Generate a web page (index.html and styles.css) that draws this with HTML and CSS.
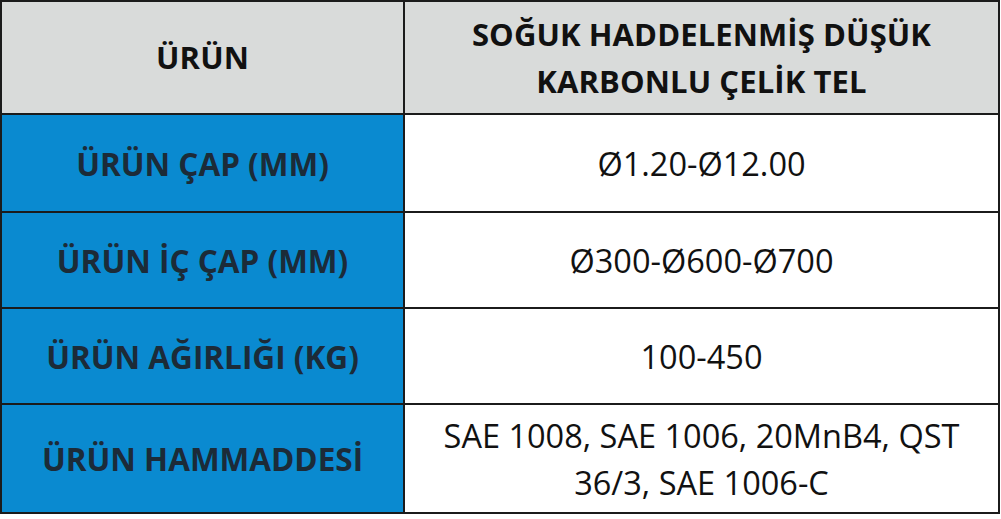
FILE: index.html
```html
<!DOCTYPE html>
<html lang="tr">
<head>
<meta charset="utf-8">
<link rel="stylesheet" href="styles.css">
</head>
<body>
<div class="spec">
  <div class="cell head">ÜRÜN</div>
  <div class="cell head">SOĞUK HADDELENMİŞ DÜŞÜK<br>KARBONLU ÇELİK TEL</div>
  <div class="cell label">ÜRÜN ÇAP (MM)</div>
  <div class="cell value">Ø1.20-Ø12.00</div>
  <div class="cell label">ÜRÜN İÇ ÇAP (MM)</div>
  <div class="cell value">Ø300-Ø600-Ø700</div>
  <div class="cell label">ÜRÜN AĞIRLIĞI (KG)</div>
  <div class="cell value">100-450</div>
  <div class="cell label">ÜRÜN HAMMADDESİ</div>
  <div class="cell value">SAE 1008, SAE 1006, 20MnB4, QST<br>36/3, SAE 1006-C</div>
</div>
</body>
</html>
```
FILE: styles.css
```css
html, body {
  margin: 0;
  padding: 0;
  background: #ffffff;
}
.spec {
  width: 1000px;
  box-sizing: border-box;
  display: grid;
  grid-template-columns: 401px 1fr;
  grid-template-rows: 111px 96px 94px 94px 107px;
  gap: 2px;
  background: #1b1b1b;
  border: 2px solid #1b1b1b;
  font-family: "Open Sans", "Noto Sans", sans-serif;
}
.cell {
  display: flex;
  align-items: center;
  justify-content: center;
  text-align: center;
}
.head {
  background: #d9dbda;
  color: #111111;
  font-weight: 700;
  font-size: 31px;
  line-height: 47px;
  letter-spacing: 0.1px;
}
.label {
  background: #0a8ad0;
  color: #1c2b38;
  font-weight: 700;
  font-size: 31.5px;
}
.value {
  background: #ffffff;
  color: #111111;
  font-size: 32.5px;
  line-height: 47px;
}
```
